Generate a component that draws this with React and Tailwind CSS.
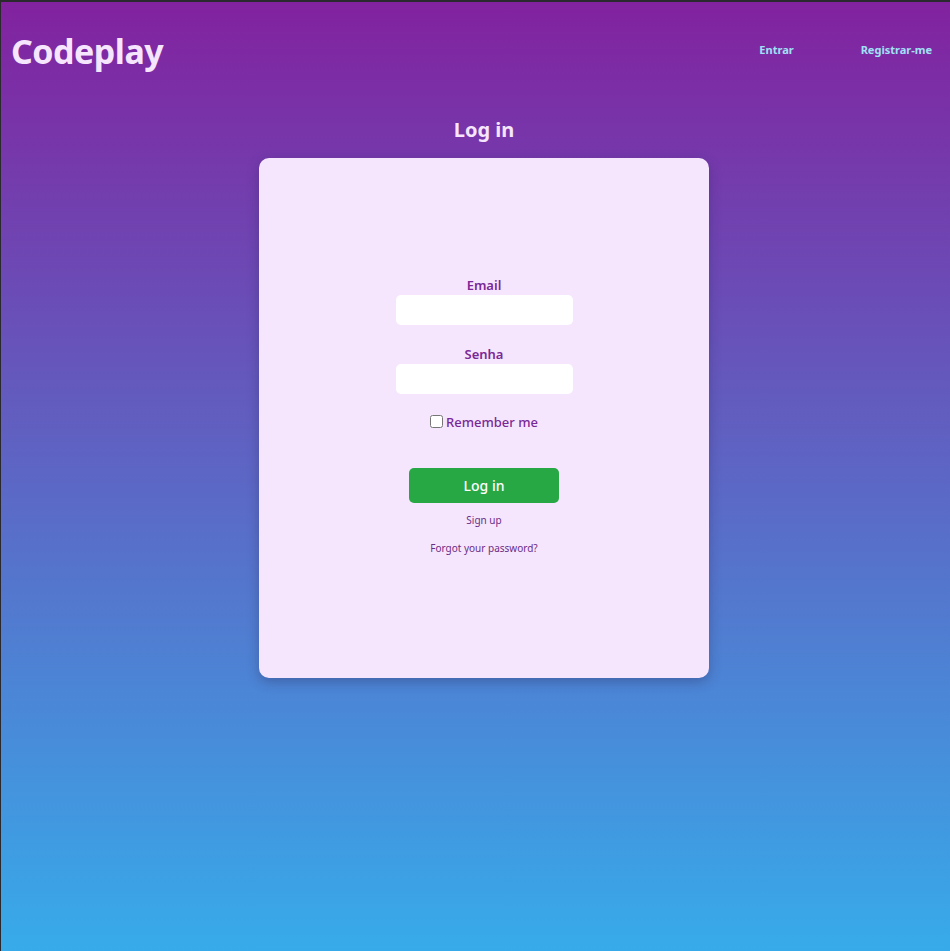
export default function App() {
  return (
    <div
      className="min-h-[951px] border-t-2 border-l border-[#2a2a2e] bg-linear-to-b/srgb from-[#82229f] to-[#37abea] text-[#f5e6fe]"
      style={{ fontFamily: '"Noto Sans", "Open Sans", sans-serif' }}
    >
      <header className="flex items-center justify-between h-[98px] pl-[10px] pr-[18px]">
        <h1 className="text-[34px] font-bold tracking-[-0.5px] leading-none text-[#f5e6fe] -mt-[1px]">Codeplay</h1>
        <nav className="flex items-center gap-[67px] text-[11px] font-bold text-[#9fe2f6] -mt-[1px]">
          <a href="#">Entrar</a>
          <a href="#">Registrar-me</a>
        </nav>
      </header>

      <main className="flex flex-col items-center pl-[17px]">
        <h2 className="text-[20px] font-bold leading-none mt-[20px] mb-[18px]">Log in</h2>
        <div className="w-[450px] h-[520px] rounded-[10px] bg-[#f5e6fe] shadow-[0_4px_12px_rgba(40,40,90,0.35)] flex flex-col items-center pt-[121px]">
          <form className="flex flex-col items-center text-[#7b2896]">
            <label className="text-[13px] font-semibold leading-none mb-[3px]">Email</label>
            <input type="email" className="w-[177px] h-[30px] rounded-[5px] bg-white outline-none" />
            <label className="text-[13px] font-semibold leading-none mt-[23px] mb-[3px]">Senha</label>
            <input type="password" className="w-[177px] h-[30px] rounded-[5px] bg-white outline-none" />
            <label className="flex items-center gap-[3px] mt-[19px] text-[13px] font-medium">
              <input type="checkbox" className="w-[13px] h-[13px] -mt-[2px]" />
              Remember me
            </label>
            <button
              type="button"
              className="mt-[35px] w-[150px] h-[35px] rounded-[5px] bg-[#28a745] text-white text-[14px] font-medium"
            >
              Log in
            </button>
            <a href="#" className="mt-[10px] text-[10px] text-[#6b2c85]">Sign up</a>
            <a href="#" className="mt-[13px] text-[10px] text-[#6b2c85]">Forgot your password?</a>
          </form>
        </div>
      </main>
    </div>
  );
}
